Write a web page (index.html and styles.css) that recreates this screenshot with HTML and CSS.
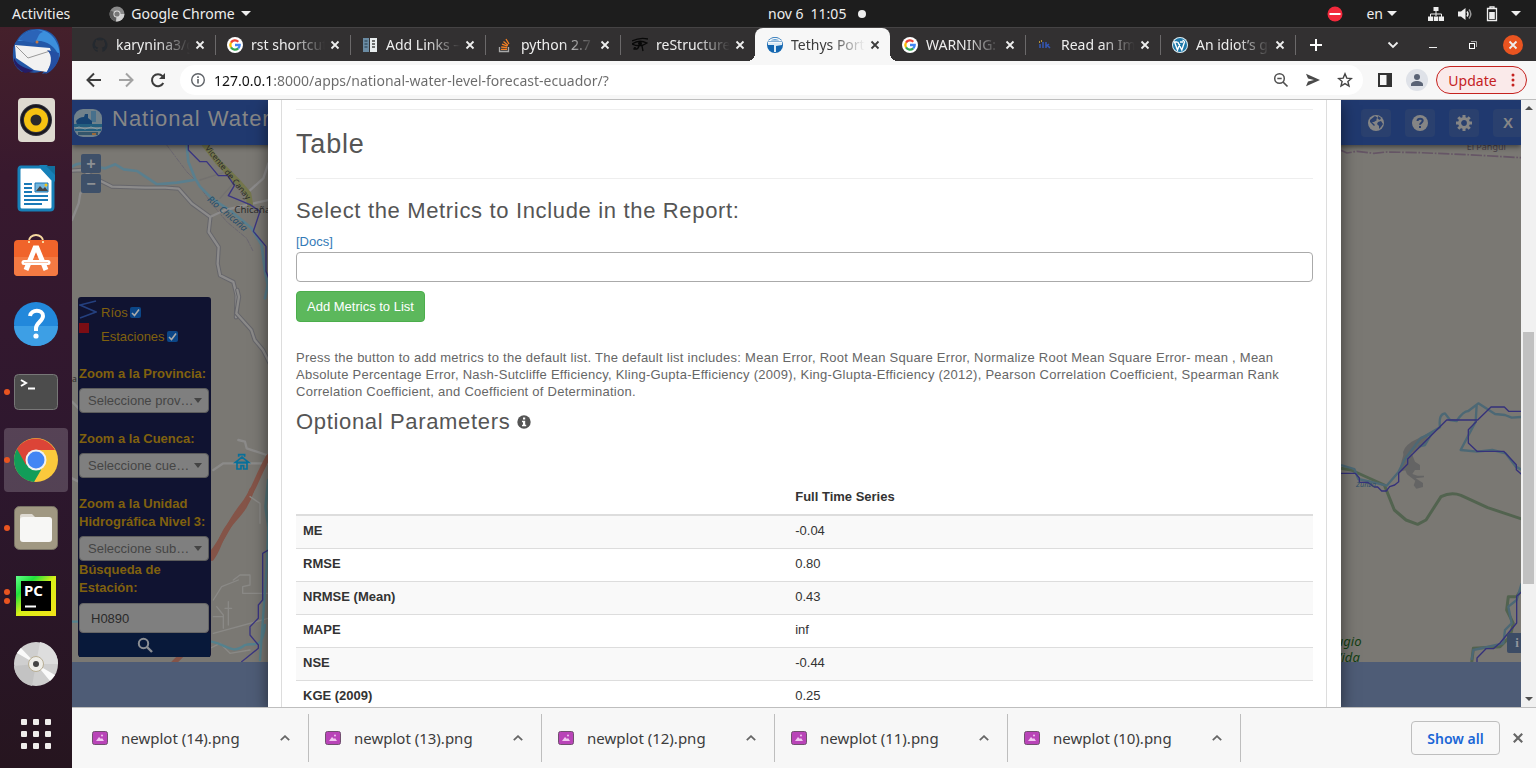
FILE: index.html
```html
<!DOCTYPE html>
<html lang="en">
<head>
<meta charset="utf-8">
<title>Tethys Portal</title>
<link rel="stylesheet" href="styles.css">
</head>
<body>
<header class="topbar">
  <div class="topbar-left">
    <span>Activities</span>
    <span class="app-menu">
      <svg width="16" height="16" viewBox="0 0 16 16"><circle cx="8" cy="8" r="7.5" fill="#8a8a8a"/><path d="M8 8 1.5 4.3A7.5 7.5 0 0 0 7 15.4z" fill="#5c5c5c"/><path d="M8 8h7.4A7.5 7.5 0 0 1 7 15.4z" fill="#d0d0d0"/><circle cx="8" cy="8" r="3.6" fill="#ddd"/><circle cx="8" cy="8" r="2.6" fill="#777"/></svg>
      <span>Google Chrome</span><i class="caret"></i>
    </span>
  </div>
  <div class="clock"><span>nov 6&ensp;11:05</span><i class="dot"></i></div>
  <div class="tray">
    <svg width="16" height="16" viewBox="0 0 16 16"><circle cx="8" cy="8" r="7.5" fill="#f2293c"/><path d="M2.500 8h11" stroke="#fff" stroke-width="2"/></svg>
    <span class="lang">en<i class="caret"></i></span>
    <svg class="net" width="16" height="16" viewBox="0 0 16 16" fill="#eee"><path d="M5.500 1h5v4h-5zM0 10.500h5V15H0zM5.800 10.500h4.500V15H5.800zM11 10.500h5V15h-5z"/><path d="M8 5v5M2.500 11V8h11v3" fill="none" stroke="#eee"/></svg>
    <svg width="16" height="16" viewBox="0 0 16 16"><path d="M1 5.500h3L8.500 2v12L4 10.500H1z" fill="#eee"/><path d="M10 5.500q2 2.500 0 5" fill="none" stroke="#eee" stroke-width="1.500"/><path d="M12 3.500q3.600 4.500 0 9" fill="none" stroke="#999" stroke-width="1.500"/></svg>
    <svg width="12" height="16" viewBox="0 0 12 16"><path d="M1.500 2.500h9v12h-9zM4 2V.8h4V2" fill="none" stroke="#eee" stroke-width="1.300"/><path d="M3.200 6h5.600v7H3.200z" fill="#eee"/></svg>
    <i class="caret"></i>
  </div>
</header>

<div class="desktop">
<nav class="dock" aria-label="Dock">
  <button class="launcher" aria-label="Thunderbird"><svg viewBox="0 0 48 48"><path d="M24 1C37 0 48 9 48 24c0 10-7 20-18 22l3-4c-7 4-17 3-20 0l-3 2C3 40 0 33 1 24c0-6 2-9 4-12C10 4 16 1 24 1z" fill="#2358a8"/><path d="M6 13C14 0 32-2 41 9c5 6 8 15 6 21-2-9-8-15-18-17z" fill="#3c8fdc"/><path d="M7 12C13 2 25 0 31 4c-6 1-4 8-10 11z" fill="#2b64b8"/><path d="m3 17 35 3 3 12-6 12-13-2-18-12z" fill="#f2f2f2"/><path d="m4 18 12 12 22-7" fill="none" stroke="#9a9a9a"/><path d="M2 30c4 9 13 10 20 13l-9 2C6 41 1 37 2 30z" fill="#251d66"/><path d="M35 22c6 5 5 16-2 24 8-2 14-11 14-21z" fill="#244fa3"/><circle cx="25" cy="14" r="1.500" fill="#c77842"/></svg></button>
  <button class="launcher" aria-label="Rhythmbox"><svg viewBox="0 0 48 48"><rect x="6" y="2" width="37" height="44" rx="4" fill="#dedad0"/><circle cx="24" cy="24" r="16" fill="#30303a"/><circle cx="24" cy="24" r="12" fill="#f5c211"/><circle cx="24" cy="24" r="5.500" fill="#2b2b2b"/><circle cx="24" cy="24" r="14" fill="none" stroke="#17171d" stroke-width="2"/></svg></button>
  <button class="launcher" aria-label="Writer"><svg viewBox="0 0 48 48"><path d="M9 3h20l12 13v27q0 3-3 3H10q-3 0-3-3V6q0-3 2-3z" fill="#fff" stroke="#1780b8" stroke-width="3"/><path d="M27 1h8l8 9v8z" fill="#1780b8"/><path d="M34 2h9v9z" fill="#126f9e"/><path d="M12 20h8m-8 4h8m-8 4h8m-8 4h24m-24 4h24m-24 4h18" stroke="#1a79b7" stroke-width="2"/><path d="M23 19h13v9H23z" fill="#73b5dc" stroke="#1a79b7"/><path d="m24 27 4-5 3 3 2-2 3 4z" fill="#444"/><circle cx="34" cy="21" r="1.500" fill="#f5c211"/></svg></button>
  <button class="launcher" aria-label="Software"><svg viewBox="0 0 48 48"><path d="M17 9a7 6 0 0 1 14 0" fill="none" stroke="#f6d9a0" stroke-width="2"/><rect x="2" y="8" width="44" height="36" rx="4" fill="#f0642b"/><path d="M2 25h44v15q0 4-4 4H6q-4 0-4-4z" fill="#f37a43"/><path d="M17 9v2m14-2v2" stroke="#f6d9a0" stroke-width="2"/><path d="m14 38 9-22h2l9 22" fill="none" stroke="#fff" stroke-width="5"/><path d="M12 30.500h24" stroke="#fff" stroke-width="5" stroke-linecap="round"/><path d="M12 30.500h24" stroke="#f8c2a6"/></svg></button>
  <button class="launcher" aria-label="Help"><svg viewBox="0 0 48 48"><circle cx="24" cy="24" r="22" fill="#2288db"/><path d="M2 26h44a22 20 0 0 1-44 0z" fill="#3d9fe5"/><path d="M18 16c1-7 13-7 13 0 0 5-7 7-7 12v3" fill="none" stroke="#fff" stroke-width="4"/><circle cx="24" cy="36" r="2.600" fill="#fff"/></svg></button>
  <button class="launcher running" aria-label="Terminal"><svg viewBox="0 0 48 48"><rect x="2.500" y="6.500" width="43" height="35" rx="4" fill="#4c4c4c" stroke="#777"/><path d="m9 12 5 3-5 3M16 20.500h7" fill="none" stroke="#fff" stroke-width="2"/></svg></button>
  <button class="launcher running current" aria-label="Google Chrome"><svg viewBox="0 0 48 48"><circle cx="24" cy="24" r="22" fill="#fbc93c"/><path d="M24 24 5 13a22 22 0 0 0 17 33l7-12z" fill="#129d59"/><path d="M24 14h19A22 22 0 0 0 5 13l9 16z" fill="#dc4437"/><circle cx="24" cy="24" r="10.500" fill="#f1f1f1"/><circle cx="24" cy="24" r="8.500" fill="#4285f4"/></svg></button>
  <button class="launcher running" aria-label="Files"><svg viewBox="0 0 48 48"><rect x="2.500" y="2.500" width="43" height="43" rx="5" fill="#a09882" stroke="#777164"/><path d="M8 12q0-2 2-2h10l4 4v20H8z" fill="#dedad2"/><rect x="8" y="13" width="32" height="25" rx="3" fill="#f7f7f5"/></svg></button>
  <button class="launcher running twice" aria-label="PyCharm"><svg viewBox="0 0 48 48"><defs><linearGradient id="pc" x2="1" y2="1"><stop stop-color="#62ff8b"/><stop offset=".25" stop-color="#21e03c"/><stop offset=".5" stop-color="#d9ef18"/><stop offset="1" stop-color="#f2e318"/></linearGradient></defs><rect x="4" y="4" width="40" height="40" fill="url(#pc)"/><rect x="9" y="9" width="30" height="30" fill="#000"/><path d="M13 34.500h11" stroke="#fff" stroke-width="2"/><text x="12" y="24" class="pc-text">PC</text></svg></button>
  <button class="launcher" aria-label="Disc"><svg viewBox="0 0 48 48"><circle cx="24" cy="24" r="22" fill="#cfcfcf"/><path d="M24 24 5 13a22 22 0 0 1 4-5zM24 24l19 11a22 22 0 0 1-5 6z" fill="#fafafa"/><path d="m24 24 4-22a22 22 0 0 1 18 22z" fill="#ddd"/><path d="m24 24-4 22A22 22 0 0 1 2 26z" fill="#c3c3c3"/><circle cx="24" cy="24" r="7.500" fill="#eeede8" stroke="#b8ae94"/><circle cx="24" cy="24" r="3" fill="#444"/></svg></button>
  <button class="launcher all-apps" aria-label="Show applications"><svg viewBox="0 0 48 48" fill="#f0eeec"><rect x="9" y="9" width="6" height="6" rx="1"/><rect x="21" y="9" width="6" height="6" rx="1"/><rect x="33" y="9" width="6" height="6" rx="1"/><rect x="9" y="21" width="6" height="6" rx="1"/><rect x="21" y="21" width="6" height="6" rx="1"/><rect x="33" y="21" width="6" height="6" rx="1"/><rect x="9" y="33" width="6" height="6" rx="1"/><rect x="21" y="33" width="6" height="6" rx="1"/><rect x="33" y="33" width="6" height="6" rx="1"/></svg></button>
</nav>

<div class="browser">
  <svg width="0" height="0" class="defs">
    <symbol id="x" viewBox="0 0 10 10"><path d="m1.500 1.500 7 7m0-7-7 7" fill="none" stroke="currentColor" stroke-width="1.800"/></symbol>
    <symbol id="google" viewBox="0 0 16 16"><circle cx="8" cy="8" r="8" fill="#fff"/><g fill="none" stroke-width="2.300"><path d="M11.300 4.700A4.700 4.700 0 0 0 4 5.600" stroke="#ea4335"/><path d="M4 5.600a4.700 4.700 0 0 0 0 4.800" stroke="#fbbc05"/><path d="M4 10.400a4.700 4.700 0 0 0 7.200 1" stroke="#34a853"/><path d="M11.200 11.400A4.500 4.500 0 0 0 12.700 8H8" stroke="#4285f4"/></g></symbol>
    <symbol id="pic" viewBox="0 0 16 14"><rect x=".5" y=".5" width="15" height="13" rx="2" fill="#b944b8" stroke="#71506f"/><path d="m4 10 3-4 2 2 1-1 2 3z" fill="#f0c8f0"/><circle cx="10" cy="4.500" r="1" fill="#f0c8f0"/></symbol>
    <symbol id="up" viewBox="0 0 10 6"><path d="m.8 5.200 4.200-4 4.200 4" fill="none" stroke="#666" stroke-width="1.800"/></symbol>
  </svg>

  <div class="tabstrip">
    <div class="tab"><svg class="fav" viewBox="0 0 16 16"><path d="M8 .5a7.500 7.500 0 0 0-2.400 14.600v-2.300C3 13.200 3 11.500 2 11c2-.2 2 1.400 3.600 1 0-.8.400-1.100.7-1.400C2 10 2.500 5.500 4 4.500V2.700c1 0 1.500.4 2.200.8q2-.4 3.800 0C10.800 3 11.200 2.700 12 2.700v1.800c2 2 1.500 5.600-2.300 6.100.5.500.7 1 .7 2v2.500A7.500 7.500 0 0 0 8 .5z" fill="#24292f"/></svg><span class="tab-title">karynina3/geo</span><button class="tab-x" aria-label="Close"><svg><use href="#x"/></svg></button></div>
    <div class="tab"><svg class="fav"><use href="#google"/></svg><span class="tab-title">rst shortcuts</span><button class="tab-x" aria-label="Close"><svg><use href="#x"/></svg></button></div>
    <div class="tab"><svg class="fav" viewBox="0 0 16 16"><path d="M1 1h6v14H1z" fill="#6a8ba3"/><path d="M8 1h7v14H8z" fill="#e8ecee"/><path d="M2.500 4h3m-3 3h3m-3 3h3" stroke="#223948"/><path d="M10 4h3m-3 3h3m-3 3h3" stroke="#444" stroke-width="1.500"/></svg><span class="tab-title">Add Links — R</span><button class="tab-x" aria-label="Close"><svg><use href="#x"/></svg></button></div>
    <div class="tab"><svg class="fav" viewBox="0 0 16 16"><path d="M2.500 10v4.500h9V10" fill="none" stroke="#a9a9a9" stroke-width="1.300"/><path d="M4 12.300h6M4.200 10l6 .7M5 7.200l5.500 2M6.500 4.500l4.500 3.800M9 2l3 5" stroke="#f48024" stroke-width="1.300"/></svg><span class="tab-title">python 2.7 - re</span><button class="tab-x" aria-label="Close"><svg><use href="#x"/></svg></button></div>
    <div class="tab plain"><svg class="fav" viewBox="0 0 16 16" fill="none" stroke="#080808" stroke-width="1.300"><path d="M0 4q8-4 16-2M0 7q7-5 15-1-7 5-15 1M10 9l1 5M7 9q-1 4-5 3 0-2 2-1"/><circle cx="8" cy="6.500" r="1.300" fill="#080808"/></svg><span class="tab-title">reStructuredT</span><button class="tab-x" aria-label="Close"><svg><use href="#x"/></svg></button></div>
    <div class="tab active plain"><svg class="fav" viewBox="0 0 16 16"><circle cx="8" cy="8" r="8" fill="#1467b1"/><path d="M1 5.500h14M2 4a8 8 0 0 1 12 0z" stroke="#f6f8fa" stroke-width="1.200" fill="#5b9bd0"/><path d="M3 8h4v7h2V9l6-1V6H1v2z" fill="#dcebf6"/></svg><span class="tab-title">Tethys Portal</span><button class="tab-x" aria-label="Close"><svg><use href="#x"/></svg></button></div>
    <div class="tab"><svg class="fav"><use href="#google"/></svg><span class="tab-title">WARNING: Title</span><button class="tab-x" aria-label="Close"><svg><use href="#x"/></svg></button></div>
    <div class="tab"><svg class="fav" viewBox="0 0 16 16"><path d="M2 5h1m1-1h1" stroke="#e0b03a" stroke-width="1.500"/><path d="M3 7v4m3-6v6m3-6v6m0-2 3-2m-2 1 3 3" fill="none" stroke="#3557b5" stroke-width="1.500"/></svg><span class="tab-title">Read an Image</span><button class="tab-x" aria-label="Close"><svg><use href="#x"/></svg></button></div>
    <div class="tab"><svg class="fav" viewBox="0 0 16 16"><circle cx="8" cy="8" r="8" fill="#dff0f7"/><circle cx="8" cy="8" r="7" fill="#1d77a8"/><path d="m2.500 5 3 8 2.300-6M5.500 5H1.800m4 0 4 8 2.700-8q-1-2-2-1.500M8 5h3" fill="none" stroke="#fff" stroke-width="1.400"/></svg><span class="tab-title">An idiot’s guide</span><button class="tab-x" aria-label="Close"><svg><use href="#x"/></svg></button></div>
    <button class="new-tab" aria-label="New tab"><svg width="14" height="14" viewBox="0 0 14 14"><path d="M7 1v12M1 7h12" stroke="#fff" stroke-width="2"/></svg></button>
    <div class="window-controls">
      <button aria-label="Search tabs"><svg width="12" height="8" viewBox="0 0 12 8"><path d="m1.500 1.500 4.500 4.500 4.500-4.500" fill="none" stroke="#eee" stroke-width="1.800"/></svg></button>
      <button aria-label="Minimize"><svg width="10" height="10" viewBox="0 0 10 10"><path d="M1 7.500h8" stroke="#eee"/></svg></button>
      <button aria-label="Restore"><svg width="10" height="10" viewBox="0 0 10 10" fill="none"><path d="M3 1.500h5.500V7" stroke="#aaa"/><rect x="1.500" y="3.500" width="5" height="5" stroke="#fff"/></svg></button>
      <button class="win-close" aria-label="Close window"><svg width="10" height="10"><use href="#x"/></svg></button>
    </div>
  </div>

  <div class="toolbar">
    <button class="tool" aria-label="Back"><svg width="16" height="16" viewBox="0 0 16 16"><path d="M15 8H2m6-6.500L1.500 8 8 14.500" fill="none" stroke="#3c3c3c" stroke-width="2"/></svg></button>
    <button class="tool" aria-label="Forward"><svg width="16" height="16" viewBox="0 0 16 16"><path d="M1 8h13M8 1.500 14.500 8 8 14.500" fill="none" stroke="#a3a3a3" stroke-width="2"/></svg></button>
    <button class="tool" aria-label="Reload"><svg width="16" height="16" viewBox="0 0 16 16"><path d="M13.300 11A6 6 0 1 1 12.500 4.200l1 1" fill="none" stroke="#3c3c3c" stroke-width="2"/><path d="M15 1v6H9z" fill="#3c3c3c"/></svg></button>
    <div class="omnibox">
      <svg width="16" height="16" viewBox="0 0 16 16"><circle cx="8" cy="8" r="6.300" fill="none" stroke="#5f6368" stroke-width="1.400"/><path d="M8 7v4.500M8 4.300v1.600" stroke="#5f6368" stroke-width="1.600"/></svg>
      <input class="url" aria-label="Address" value="127.0.0.1:8000/apps/national-water-level-forecast-ecuador/?">
      <button class="tool" aria-label="Zoom"><svg width="16" height="16" viewBox="0 0 16 16"><circle cx="6.500" cy="6.500" r="4.800" fill="none" stroke="#505050" stroke-width="1.500"/><path d="M4.300 6.500h4.400M10 10l4.500 4.500" stroke="#505050" stroke-width="1.700"/></svg></button>
      <button class="tool" aria-label="Share"><svg width="16" height="16" viewBox="0 0 16 16"><path d="m1 1.800 14 6.200-14 6.200L3 9.500 9 8 3 6.500z" fill="#4a4a4a"/></svg></button>
      <button class="tool" aria-label="Bookmark"><svg width="16" height="16" viewBox="0 0 16 16"><path d="m8 1.800 1.800 4.300 4.600.4-3.500 3 1.100 4.600L8 11.600l-4 2.500 1.100-4.600-3.500-3 4.600-.4z" fill="none" stroke="#444" stroke-width="1.400"/></svg></button>
    </div>
    <button class="tool side" aria-label="Side panel"><svg width="14" height="14" viewBox="0 0 14 14"><path d="M1 1h12v12H1z" fill="none" stroke="#333" stroke-width="2"/><path d="M8.500 1H13v12H8.500z" fill="#333"/></svg></button>
    <button class="tool" aria-label="Profile"><svg width="22" height="22" viewBox="0 0 22 22"><circle cx="11" cy="11" r="11" fill="#dfe2e8"/><circle cx="11" cy="8" r="3" fill="#5a6375"/><path d="M5 17v-1.500c0-2 3-3.500 6-3.500s6 1.500 6 3.500V17z" fill="#5a6375"/></svg></button>
    <button class="update"><span>Update</span><svg width="4" height="14" viewBox="0 0 4 14" fill="#c5221f"><circle cx="2" cy="2" r="1.500"/><circle cx="2" cy="7" r="1.500"/><circle cx="2" cy="12" r="1.500"/></svg></button>
  </div>

  <div class="page">
    <main class="viewport">
      <div class="app">
        <header class="app-header">
          <svg class="app-logo" viewBox="0 0 28 28"><rect width="28" height="28" rx="9" fill="#70818b"/><path d="M17 2h5v11h-5z" fill="#47708c"/><path d="M2 12q3-4 8-4l1-3h3v4l4 3v4H3z" fill="#174371"/><path d="M0 15h28v3H0zM1 20h26v2H1z" fill="#235e7e"/><path d="M2 19q3-2 6 0t6 0 6 0 6 0" fill="none" stroke="#839aa2"/><path d="M4 23h20v3H4z" fill="#33556b"/><path d="M18 25h4" stroke="#98683a" stroke-width="2"/></svg>
          <h1 class="app-title">National Water Level</h1>
          <nav class="app-nav">
            <button aria-label="Language"><svg width="16" height="16" viewBox="0 0 16 16"><circle cx="8" cy="8" r="8" fill="#858585"/><path d="m7 1 3 2-2 1 1 1-3 2H4l3 3-1 1-4-4V5zM10 7l3-1 2 3-2 3-2 2V11L9 9zM10 1l3 2-1 2-2-1z" fill="#2a406e"/></svg></button>
            <button aria-label="Help"><svg width="16" height="16" viewBox="0 0 16 16"><circle cx="8" cy="8" r="8" fill="#858585"/><path d="M5.500 6c.2-3.200 5.200-3 5.200-.2C10.700 7.600 8 7.800 8 9.800" fill="none" stroke="#2a406e" stroke-width="2"/><path d="M7 11h2v2H7z" fill="#2a406e"/></svg></button>
            <button aria-label="Settings"><svg width="16" height="16" viewBox="0 0 16 16"><circle cx="8" cy="8" r="4.400" fill="none" stroke="#858585" stroke-width="3"/><path d="M8 0v3m0 10v3M0 8h3m10 0h3M2.300 2.300l2 2m7.400 7.400 2 2m0-11.400-2 2m-7.400 7.400-2 2" stroke="#858585" stroke-width="3"/></svg></button>
            <button aria-label="Exit">X</button>
          </nav>
        </header>
        <div class="map">
          <svg class="map-west" viewBox="0 0 588 1551">
            <g fill="none" stroke-linejoin="round" stroke-linecap="round">
              <g transform="translate(-216 -165)">
                <path d="m500 165 60 80 30 30 40 60 50 60 60 50 20 40" stroke="#6a6670" stroke-width="3" stroke-dasharray="12 5 3 5"/>
                <path d="M216 230q20-15 40-5l60 10 30-12 25 15 40 5 30 20 30 20 60-5 50-8M560 165l5 50 20 50 15 25 35 35 60 40 60 50 30 50 10 80 8 40-8 40" stroke="#5a7f8e" stroke-width="8"/>
                <path d="m216 242 30-2 50 30 40 20 100 3 60 0 40 3 40 45 55 40-5 45 30 45-3 50 7 35 40 20 10 40-2 66" stroke="#66666b" stroke-width="13"/>
                <path d="m216 242 30-2 50 30 40 20 100 3 60 0 40 3 40 45 55 40-5 45 30 45-3 50 7 35 40 20 10 40-2 66M630 381l45-21 130-30M740 310l50-45 15-45M216 390l20-50 5-30 30-30" stroke="#8c8b8b" stroke-width="7"/>
                <path d="m610 165 30 40 60 70 40 40 10 35M600 270l70-22M660 325l40-45" stroke="#73716f" stroke-width="4"/>
                <path d="m615 165 40 52 60 60 30 35 5 30" stroke="#74764c" stroke-width="18"/>
                <path d="m565 150 0 30 35 35h20l35 42h28l20 30-18 30 65 27 30 20-20 60 38 45v75l8 20" stroke="#3a3582" stroke-width="4"/>
              </g>
              <g transform="translate(-216 435)">
                <path d="m712 0 5 20-8 50 45 50 10 30 25 30 20 40" stroke="#65656a" stroke-width="13"/>
                <path d="m712 0 5 20-8 50 45 50 10 30 25 30 20 40M216 335l20 20M216 565l20 10M640 540l30-20h135M715 450l20 5 5 20 60 20" stroke="#8b8a89" stroke-width="7"/>
                <path d="M805 500c-40 70-40 100-80 150s-50 90-90 140" stroke="#845448" stroke-width="15"/>
                <path d="m805 570-8 80 8 60" stroke="#55767c" stroke-width="9"/>
              </g>
              <g transform="translate(-216 1035)">
                <path d="M755 0c-15 60-60 90-80 125s-20 55-40 80M520 520l25-25" stroke="#845448" stroke-width="15"/>
                <path d="m700 270 20-15h30v30l-22 5v20h75M640 330l25-40 50-20M650 350l20 25v40M640 430l165-45M685 335v70M675 355h20M620 480l40-20 30 30 60-10M640 380h30v35M750 20l30 20v60" stroke="#8a8986" stroke-width="4"/>
                <path d="M216 395h16M635 455c50 10 60 40 100 10 30-10 50 20 60-60M805 100l-5 130-20 280" stroke="#55818d" stroke-width="7"/>
                <path d="m805 180-17 10v140l-13 15v40l-25 25v25l25 30v10l-50 40" stroke="#3a3582" stroke-width="4"/>
              </g>
            </g>
            <g fill="#2c2c2c" class="map-text">
              <text transform="translate(398 10) rotate(51)" font-size="25">Vicente de Canay</text>
              <text transform="translate(404 166) rotate(40)" font-size="28" class="it" fill="#234d6b">Río Chicaña</text>
              <text x="487" y="204" font-size="29">Chicaña</text>
              <text x="0" y="710" font-size="26">a</text>
            </g>
            <path d="M490 952l20-16 20 16zM495 954h30v18h-10v-10h-8v10h-12zM500 935v-6h18v6" fill="none" stroke="#08709a" stroke-width="5"/>
          </svg>
          <svg class="map-east" viewBox="0 0 540 1551">
            <g fill="none" stroke-linejoin="round">
              <path d="m0 16 18 8 30-5 50 6 40-4 100 2 140 6 162 9" stroke="#665666" stroke-width="5" stroke-dasharray="34 5 5 5"/>
              <g transform="translate(-63 555)">
                <path d="M250 375q-5-20 25-40l50-25-5 30-45 30 10 25 15 10v15h-15l-8 12 15 5h20v5l-25 3 22 14v12l-20 5-8-10 5-14-25-19-5-12-20 5z" fill="#646464"/>
                <path d="m63 415 30 5 100 45 30 75 35 30 35 13 25-13 45-70q30-15 60-4l80 37 105 35M610 770l-20 30h-25l-5 40 20 40-10 40-30 30-80 5-5 45" stroke="#52634f" stroke-width="9"/>
                <path d="m63 405 40 12 12 30 45 10 40 10 35-40 20-40 45-60 60-35q-5-40 15-42l15 20 20 3q20-30 35-30l30-23 50 32 30 3 20 8 40-3M470 225l-3 50-45 85 50 5 45-5 40 10 30 40 20 10M605 760l-15 50-25 20 10 50-20 20-5 40-90 20-5 30M300 325l35-15-20 35-20 5" stroke="#4c6875" stroke-width="7"/>
                <path d="M63 430h43l12 14v13h25l20 14h10l12 12h14l10-13 15-5 12-10v-25l27-28v-15l117-117h93l40-39h40l13 13h55M470 274l-25 25v40l26 25h80l38 40v15l20 18M605 785l-15 14v80l-50 60-20 17h-22l-27 28v15" stroke="#35317b" stroke-width="4"/>
              </g>
            </g>
            <g class="map-text">
              <text x="377" y="16" font-size="27" fill="#494049">El Pangui</text>
              <text x="45" y="1025" font-size="22" class="it" fill="#314f68">Zunza</text>
              <text x="-28" y="1503" font-size="39" class="it" fill="#123f12">fugio</text>
              <text x="-20" y="1550" font-size="39" class="it" fill="#123f12">Vida</text>
            </g>
          </svg>
          <span class="attribution">i</span>
        </div>
        <div class="zoom"><button aria-label="Zoom in">+</button><button aria-label="Zoom out">−</button></div>
        <form class="panel">
          <div class="legend"><svg width="18" height="20" viewBox="0 0 18 20"><path d="M17 1 1 5l16 7L1 18" fill="none" stroke="#24407f" stroke-width="1.600"/></svg><label>Ríos <input type="checkbox" checked></label></div>
          <div class="legend station"><i class="square"></i><label>Estaciones <input type="checkbox" checked></label></div>
          <label class="field-label" for="prov">Zoom a la Provincia:</label>
          <select id="prov"><option>Seleccione prov…</option></select>
          <label class="field-label" for="cue">Zoom a la Cuenca:</label>
          <select id="cue"><option>Seleccione cue…</option></select>
          <label class="field-label" for="sub">Zoom a la Unidad Hidrográfica Nivel 3:</label>
          <select id="sub"><option>Seleccione sub…</option></select>
          <label class="field-label tight" for="est">Búsqueda de Estación:</label>
          <input id="est" class="station-input" value="H0890">
          <button type="button" class="search" aria-label="Buscar"><svg width="16" height="16" viewBox="0 0 16 16"><circle cx="6.500" cy="6.500" r="4.700" fill="none" stroke="#8b8e93" stroke-width="2"/><path d="m10 10 5 5" stroke="#8b8e93" stroke-width="2.400"/></svg></button>
        </form>
      </div>

      <section class="modal">
        <div class="pane">
          <hr>
          <h2>Table</h2>
          <hr>
          <h3>Select the Metrics to Include in the Report:</h3>
          <a class="docs" href="#docs">[Docs]</a>
          <input class="metrics" aria-label="Metrics">
          <button class="add">Add Metrics to List</button>
          <p class="hint">Press the button to add metrics to the default list. The default list includes: Mean Error, Root Mean Square Error, Normalize Root Mean Square Error- mean , Mean Absolute Percentage Error, Nash-Sutcliffe Efficiency, Kling-Gupta-Efficiency (2009), King-Glupta-Efficiency (2012), Pearson Correlation Coefficient, Spearman Rank Correlation Coefficient, and Coefficient of Determination.</p>
          <h3>Optional Parameters <svg width="14" height="14" viewBox="0 0 14 14"><circle cx="7" cy="7" r="6.700" fill="#555"/><path d="M6 2.500h2.200v2H6zM5 5.700h3.200v4h1v1.500H5V9.700h1V7.200H5z" fill="#fff"/></svg></h3>
          <table>
            <thead><tr><th class="metric"></th><th>Full Time Series</th></tr></thead>
            <tbody>
              <tr><th>ME</th><td>-0.04</td></tr>
              <tr><th>RMSE</th><td>0.80</td></tr>
              <tr><th>NRMSE (Mean)</th><td>0.43</td></tr>
              <tr><th>MAPE</th><td>inf</td></tr>
              <tr><th>NSE</th><td>-0.44</td></tr>
              <tr><th>KGE (2009)</th><td>0.25</td></tr>
            </tbody>
          </table>
        </div>
      </section>
    </main>
    <div class="scrollbar"><i class="arrow-up"></i><i class="thumb"></i><i class="arrow-down"></i></div>
  </div>

  <footer class="downloads">
    <div class="download"><svg width="16" height="14"><use href="#pic"/></svg><span>newplot (14).png</span><button aria-label="Options"><svg width="10" height="6"><use href="#up"/></svg></button></div>
    <div class="download"><svg width="16" height="14"><use href="#pic"/></svg><span>newplot (13).png</span><button aria-label="Options"><svg width="10" height="6"><use href="#up"/></svg></button></div>
    <div class="download"><svg width="16" height="14"><use href="#pic"/></svg><span>newplot (12).png</span><button aria-label="Options"><svg width="10" height="6"><use href="#up"/></svg></button></div>
    <div class="download"><svg width="16" height="14"><use href="#pic"/></svg><span>newplot (11).png</span><button aria-label="Options"><svg width="10" height="6"><use href="#up"/></svg></button></div>
    <div class="download"><svg width="16" height="14"><use href="#pic"/></svg><span>newplot (10).png</span><button aria-label="Options"><svg width="10" height="6"><use href="#up"/></svg></button></div>
    <button class="show-all">Show all</button>
    <button class="close-shelf" aria-label="Close"><svg width="12" height="12"><use href="#x"/></svg></button>
  </footer>
</div>
</div>
</body>
</html>
```
FILE: styles.css
```css
* { box-sizing: border-box; }
body {
  margin: 0; height: 100vh; overflow: hidden;
  display: flex; flex-direction: column;
  font-family: "Noto Sans", "Open Sans", sans-serif; font-size: 14px;
}
button { border: 0; padding: 0; background: none; font: inherit; color: inherit; display: flex; align-items: center; justify-content: center; }
svg { flex: none; display: block; }
.defs { position: absolute; }

.topbar {
  flex: none; height: 27px; background: #1d1d1d; color: #eee;
  display: grid; grid-template-columns: 50% 1fr auto; align-items: center;
}
.topbar-left { display: flex; align-items: center; gap: 39px; padding-left: 12px; }
.app-menu { display: flex; align-items: center; gap: 6px; }
.caret { border: 5px solid transparent; border-top-color: #eee; border-bottom: 0; }
.clock { display: flex; align-items: center; gap: 12px; }
.dot { width: 8px; height: 8px; border-radius: 50%; background: #eee; }
.tray { display: flex; align-items: center; gap: 13px; padding-right: 15px; }
.lang { display: flex; align-items: center; gap: 4px; margin: 0 18px 0 10px; }

.desktop { flex: 1; min-height: 0; display: flex; }
.dock {
  flex: none; width: 72px; padding: 1px 0 10px;
  display: flex; flex-direction: column; align-items: center; gap: 20px;
  background: linear-gradient(#45202b, #38192e 20%, #2d172e 60%, #26151f);
}
.launcher { width: 48px; height: 48px; flex: none; position: relative; }
.launcher svg { width: 48px; height: 48px; position: relative; }
.launcher.running::before { content: ""; position: absolute; z-index: 1; left: -8px; top: 21px; width: 6px; height: 6px; border-radius: 50%; background: #e95420; }
.launcher.twice::before { top: 17px; box-shadow: 0 9px #e95420; }
.launcher.current::after { content: ""; position: absolute; inset: -8px; border-radius: 4px; background: #ffffff30; }
.launcher.current svg { z-index: 1; }
.all-apps { margin-top: auto; }
.pc-text { font: bold 15px "Noto Sans", sans-serif; fill: #fff; }

.browser { flex: 1; min-width: 0; display: flex; flex-direction: column; }
.tabstrip { flex: none; height: 34px; display: flex; padding-left: 8px; background: #323031; color: #eee; border-top: 1px solid #454344; }
.tab { flex: 0 1 135px; min-width: 0; position: relative; display: flex; align-items: center; padding: 0 5px 0 12px; }
.fav { width: 16px; height: 16px; margin-right: 8px; }
.tab-title { flex: 1; min-width: 0; overflow: hidden; white-space: nowrap; mask-image: linear-gradient(90deg, #000 55%, transparent); }
.tab-x { width: 20px; height: 20px; flex: none; }
.tab-x svg { width: 10px; height: 10px; }
.tab:not(.plain)::after { content: ""; position: absolute; right: -1px; top: 7px; width: 1px; height: 20px; background: #6b696a; }
.tab.active { background: #f7f7f7; color: #3c3c3c; border-radius: 8px 8px 0 0; }
.tab.active::before { content: ""; position: absolute; bottom: 0; left: -8px; right: -8px; height: 8px; background: radial-gradient(circle at 0 0, transparent 8px, #f7f7f7 8px) left / 8px 8px no-repeat, radial-gradient(circle at 100% 0, transparent 8px, #f7f7f7 8px) right / 8px 8px no-repeat; }
.new-tab { width: 42px; flex: none; }
.window-controls { margin-left: auto; padding-right: 13px; display: flex; align-items: center; gap: 20px; }
.window-controls button { width: 20px; height: 20px; border-radius: 50%; }
.window-controls .win-close { background: #e95420; }

.toolbar { flex: none; height: 39px; display: flex; align-items: center; padding: 0 9px 0 6px; background: #f7f7f7; border-bottom: 1px solid #bebebe; }
.tool { width: 32px; height: 30px; flex: none; }
.omnibox { flex: 1; height: 30px; margin: 0 6px; padding: 0 2px 0 10px; display: flex; align-items: center; border-radius: 15px; background: #fff; }
.url {
  flex: 1; min-width: 0; border: 0; padding: 0; margin-left: 8px; font: inherit; color: transparent; outline: 0;
  background: linear-gradient(90deg, #111 59px, #6a6a6a 59px) text;
}
.update { height: 28px; width: 91px; margin-left: 3px; gap: 14px; border: 1px solid #c5221f; border-radius: 14px; background: #faeaea; color: #c5221f; }

.page { flex: 1; min-height: 0; display: flex; }
.viewport { flex: 1; min-width: 0; position: relative; overflow: hidden; background: #4e5c76; font-family: "Liberation Sans", Arial, sans-serif; font-size: 13px; }
.app { height: 100%; display: flex; flex-direction: column; padding-bottom: 45px; isolation: isolate; }
.app-header { flex: none; height: 45px; display: flex; align-items: center; background: #20396f; color: #868686; box-shadow: 0 2px 5px #0007; z-index: 1; }
.app-logo { width: 28px; height: 28px; margin: 0 10px 0 2px; }
.app-title { margin: 0 0 8px; font-size: 22px; font-weight: 400; letter-spacing: 1px; white-space: nowrap; }
.app-nav { margin-left: auto; margin-right: -2px; display: flex; gap: 14px; }
.app-nav button { width: 30px; height: 28px; border-radius: 4px; background: #2a406e; font-size: 15px; font-weight: 700; }
.map { flex: 1; min-height: 0; position: relative; display: flex; justify-content: space-between; background: #7a7873; overflow: hidden; }
.map-west { width: 196px; height: 517px; }
.map-east { width: 180px; height: 517px; }
.map-text { font-family: "Noto Sans", sans-serif; }
.it { font-style: italic; }
.attribution { position: absolute; right: 0; bottom: 9px; width: 14px; height: 20px; border-radius: 2px 0 0 2px; background: #3c4c65; color: #92969d; font: 700 13px/20px "Liberation Serif", serif; text-align: center; padding-left: 6px; }
.zoom { position: absolute; left: 9px; top: 54px; display: grid; gap: 1px; }
.zoom button { width: 20px; height: 19px; background: #3e5069; color: #8d9094; font-size: 16px; font-weight: 700; border-radius: 2px; }

.panel { position: absolute; left: 6px; top: 197px; width: 133px; padding: 3px 2px 0 1px; border-radius: 3px; background: #101331; color: #80610e; display: flex; flex-direction: column; }
.legend { height: 24px; display: flex; gap: 4px; align-items: flex-start; line-height: 26px; }
.legend label { display: flex; align-items: center; gap: 2px; }
.legend input { margin: 0 0 2px; width: 11px; height: 11px; appearance: none; border-radius: 2px; background: #0b4687 url('data:image/svg+xml,<svg xmlns="http://www.w3.org/2000/svg" viewBox="0 0 11 11"><path d="m2 6 2.500 2.500L9 2.500" fill="none" stroke="%23aaa" stroke-width="1.600"/></svg>'); }
.square { width: 10px; height: 10px; margin: -1px 8px 0 0; background: #7b0d14; }
.field-label { font-weight: 700; line-height: 18px; margin: 17px 0 5px; }
.field-label.tight { margin: 0 0 6px; }
.panel select {
  height: 25px; width: 130px; padding: 0 14px 0 8px; border: 1px solid #5c5c5c; border-radius: 4px; font: inherit; color: #454545; appearance: none;
  background: #7f7f7f url('data:image/svg+xml,<svg xmlns="http://www.w3.org/2000/svg" viewBox="0 0 8 5"><path d="M0 0h8L4 5z" fill="%23444"/></svg>') no-repeat right 6px center / 8px 5px;
}
.station-input { height: 30px; width: 130px; padding: 0 11px; border: 1px solid #666; border-radius: 4px; background: #7f7f7f; color: #2a2a2a; font: inherit; }
.search { height: 24px; background: #08193a; margin-right: -1px; }

.modal { position: absolute; z-index: 2; inset: 0 180px 0 196px; padding: 0 14px 0 13px; background: #fff; box-shadow: 0 5px 15px #0008; }
.pane { border: solid #ddd; border-width: 0 1px; padding: 9px 13px 0 14px; height: 100%; overflow: hidden; display: flex; flex-direction: column; color: #333; }
.pane > * { flex: none; }
.pane hr { width: 100%; margin: 0; border: 0; border-top: 1px solid #eee; }
h2, h3 { margin: 0; font-weight: 400; color: #555; letter-spacing: 0.03em; }
h2 { font-size: 27px; line-height: 30px; padding: 19px 0; }
h3 { font-size: 22px; line-height: 24px; }
h3 svg { display: inline-block; }
hr + h3 { margin: 20px 0 10px; }
.docs { align-self: flex-start; color: #337ab7; text-decoration: none; line-height: 18px; }
.metrics { height: 30px; margin: 1px 0 9px; border: 1px solid #aaa; border-radius: 4px; }
.add { align-self: flex-start; height: 31px; padding: 0 10px; border: 1px solid #4cae4c; border-radius: 4px; background: #5cb85c; color: #fff; }
.hint { margin: 27px 0 10px; line-height: 17px; color: #666; letter-spacing: 0.02em; }
table { margin-top: 45px; width: 100%; border-collapse: collapse; table-layout: fixed; }
th, td { height: 33px; padding: 0 7px 2px; text-align: left; }
thead th { height: 36px; padding-bottom: 0; border-bottom: 2px solid #ddd; }
.metric { width: 48.4%; }
tbody tr + tr { border-top: 1px solid #ddd; }
tbody tr:nth-child(odd) { background: #f9f9f9; }

.scrollbar { flex: none; width: 15px; display: flex; flex-direction: column; align-items: center; background: #f1f1f1; padding: 6px 0; }
.scrollbar::before { content: ""; order: 1; flex: 220; }
.scrollbar::after { content: ""; order: 3; flex: 112; }
.arrow-up { border: 4px solid transparent; border-bottom-color: #505050; border-top: 0; }
.thumb { order: 2; flex: 251; width: 11px; background: #c1c1c1; }
.arrow-down { order: 4; border: 4px solid transparent; border-top-color: #505050; border-bottom: 0; }

.downloads { flex: none; height: 61px; display: flex; align-items: center; padding: 0 10px 0 4px; border-top: 1px solid #bebebe; background: #f7f7f7; color: #3c3c3c; font-size: 15px; }
.download { flex: 0 1 233px; height: 48px; display: flex; align-items: center; padding: 0 13px 0 16px; border-right: 1px solid #bebebe; }
.download span { margin-left: 13px; white-space: nowrap; }
.download button { margin-left: auto; width: 20px; height: 20px; }
.show-all { margin-left: auto; width: 89px; height: 34px; border: 1px solid #bebebe; border-radius: 4px; color: #1a66d6; font-size: 14px; font-weight: 600; }
.close-shelf { width: 16px; height: 16px; margin-left: 10px; color: #666; }
```
